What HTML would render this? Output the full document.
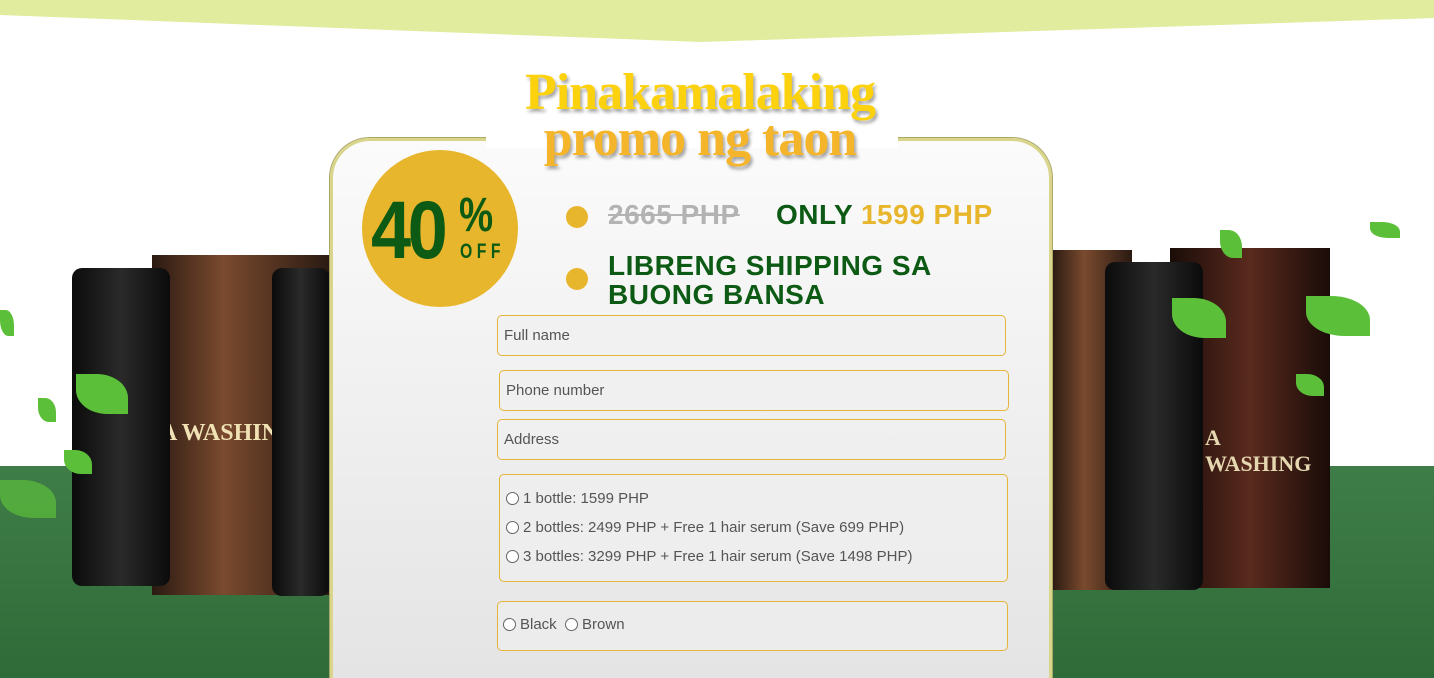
<!DOCTYPE html>
<html><head><meta charset="utf-8"><style>
*{margin:0;padding:0;box-sizing:border-box}
html,body{width:1434px;height:678px;overflow:hidden}
body{position:relative;background:#fff;font-family:"Liberation Sans",sans-serif}
.abs{position:absolute}
.green{left:0;top:466px;width:1434px;height:212px;background:linear-gradient(#3f7d48,#2f6b38)}
.card{left:330px;top:138px;width:722px;height:540px;border:3px solid #d9d58a;border-bottom:none;border-radius:40px 40px 0 0;background:linear-gradient(#fbfbfb,#e4e4e4);box-shadow:0 0 0 1px #a9a66a}
.gap{left:486px;top:128px;width:412px;height:20px;background:#fff}
.title{left:400px;top:70px;width:600px;text-align:center;font-family:"Liberation Serif",serif;font-weight:bold;font-size:52px;line-height:46px;letter-spacing:-1px;color:#f5b52a;text-shadow:2px 3px 3px rgba(0,0,0,.35)}
.title span{color:#fcd20e}
.badge{left:362px;top:150px;width:156px;height:157px;border-radius:50%;background:#e8b62c}
.b40{left:371px;top:186px;font-size:82px;font-weight:bold;color:#0c5a14;letter-spacing:-4px;transform:scaleX(.88);transform-origin:left;line-height:90px}
.pct{left:459px;top:188px;font-size:48px;font-weight:bold;color:#0c5a14;transform:scaleX(.8);transform-origin:left}
.off{left:460px;top:240px;font-size:21px;font-weight:bold;color:#0c5a14;letter-spacing:6px;transform:scaleX(.75);transform-origin:left}
.dot{width:22px;height:22px;border-radius:50%;background:#e8b62c}
.t{font-weight:bold;font-size:28px;color:#0c5a14;line-height:29px;letter-spacing:.5px}
.inp{border:1px solid #e6b43a;border-radius:5px;color:#555;font-size:15px;padding-left:6px;display:flex;align-items:center;background:rgba(240,240,240,.6)}
.r{display:inline-block;width:13px;height:13px;border:1px solid #666;border-radius:50%;background:#fff;vertical-align:-2px;margin-right:4px}
.box{background:linear-gradient(90deg,#2a1a12,#7a4a2e 40%,#2a1a12)}
.bot{background:linear-gradient(90deg,#0b0b0b,#2a2a2a,#0b0b0b);border-radius:10px}
.leaf{background:#5cbf3a;border-radius:0 60% 0 60%}
</style></head><body>
<svg class="abs" style="left:0;top:0" width="1434" height="45"><polygon points="0,0 1434,0 1434,18 700,42 0,15" fill="#e2ec9e"/></svg>
<div class="abs green"></div>
<div class="abs box" style="left:152px;top:255px;width:178px;height:340px"></div>
<div class="abs" style="left:160px;top:420px;width:170px;height:30px;color:#f1e2b5;font:bold 24px 'Liberation Serif',serif">A WASHING</div>
<div class="abs bot" style="left:72px;top:268px;width:98px;height:318px"></div>
<div class="abs bot" style="left:272px;top:268px;width:58px;height:328px"></div>
<div class="abs box" style="left:1052px;top:250px;width:80px;height:340px"></div>
<div class="abs box" style="left:1170px;top:248px;width:160px;height:340px;background:linear-gradient(90deg,#1a0c08,#5a2a1e,#1a0c08)"></div>
<div class="abs" style="left:1205px;top:425px;width:125px;color:#e5d7b0;font:bold 22px 'Liberation Serif',serif">A WASHING</div>
<div class="abs bot" style="left:1105px;top:262px;width:98px;height:328px"></div>
<div class="abs leaf" style="left:1220px;top:230px;width:22px;height:28px"></div>
<div class="abs leaf" style="left:1172px;top:298px;width:54px;height:40px"></div>
<div class="abs leaf" style="left:1306px;top:296px;width:64px;height:40px"></div>
<div class="abs leaf" style="left:1370px;top:222px;width:30px;height:16px"></div>
<div class="abs leaf" style="left:1296px;top:374px;width:28px;height:22px"></div>
<div class="abs leaf" style="left:76px;top:374px;width:52px;height:40px"></div>
<div class="abs leaf" style="left:0px;top:480px;width:56px;height:38px;opacity:.7"></div>
<div class="abs leaf" style="left:38px;top:398px;width:18px;height:24px"></div>
<div class="abs leaf" style="left:64px;top:450px;width:28px;height:24px"></div>
<div class="abs leaf" style="left:0px;top:310px;width:14px;height:26px"></div>

<div class="abs card"></div>
<div class="abs gap"></div>
<div class="abs title"><span>Pinakamalaking</span><br>promo ng taon</div>
<div class="abs badge"></div>
<div class="abs b40">40</div>
<div class="abs pct">%</div>
<div class="abs off">OFF</div>
<div class="abs dot" style="left:566px;top:206px"></div>
<div class="abs t" style="left:608px;top:200px;color:#b3b3b3;text-decoration:line-through">2665 PHP</div>
<div class="abs t" style="left:776px;top:200px">ONLY <span style="color:#e8b62c">1599 PHP</span></div>
<div class="abs dot" style="left:566px;top:268px"></div>
<div class="abs t" style="left:608px;top:251px">LIBRENG SHIPPING SA<br>BUONG BANSA</div>
<div class="abs inp" style="left:497px;top:315px;width:509px;height:41px">Full name</div>
<div class="abs inp" style="left:499px;top:370px;width:510px;height:41px">Phone number</div>
<div class="abs inp" style="left:497px;top:419px;width:509px;height:41px">Address</div>
<div class="abs inp" style="left:499px;top:474px;width:509px;height:108px;display:block;padding-top:9px;line-height:29px">
<div><span class="r"></span>1 bottle: 1599 PHP</div>
<div><span class="r"></span>2 bottles: 2499 PHP + Free 1 hair serum (Save 699 PHP)</div>
<div><span class="r"></span>3 bottles: 3299 PHP + Free 1 hair serum (Save 1498 PHP)</div></div>
<div class="abs inp" style="left:497px;top:601px;width:511px;height:50px;padding-left:5px;align-items:flex-start;padding-top:14px"><span class="r" style="margin-top:2px"></span>Black&nbsp;&nbsp;<span class="r" style="margin-top:2px"></span>Brown</div>
</body></html>
